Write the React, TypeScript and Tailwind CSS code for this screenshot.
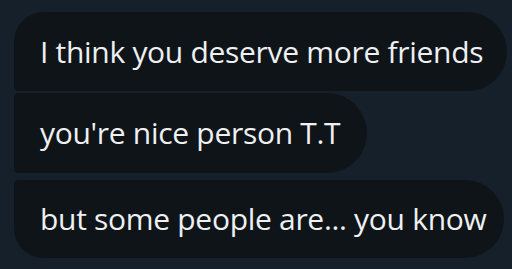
import React from "react";

export default function App() {
  return (
    <div
      className="w-[512px] h-[269px] bg-[#15202b] overflow-hidden pt-[12px] pl-[14px] flex flex-col items-start"
      style={{ fontFamily: '"Open Sans", "Noto Sans", sans-serif' }}
    >
      <div className="bg-[#0f1419] text-[#eef0f1] text-[30px] font-medium tracking-[-0.3px] leading-none h-[79px] flex items-center pl-[26px] pr-[24px] rounded-tl-[30px] rounded-bl-[4px] rounded-r-[40px]">
        I think you deserve more friends
      </div>
      <div className="mt-[2px] bg-[#0f1419] text-[#eef0f1] text-[30px] font-medium tracking-[-0.3px] leading-none h-[80px] flex items-center pl-[26px] pr-[27px] rounded-l-[4px] rounded-r-[40px]">
        you're nice person T.T
      </div>
      <div className="mt-[7px] bg-[#0f1419] text-[#eef0f1] text-[30px] font-medium tracking-[-0.3px] leading-none h-[78px] flex items-center pl-[26px] pr-[18px] rounded-tl-[4px] rounded-bl-[30px] rounded-r-[40px]">
        but some people are... you know
      </div>
    </div>
  );
}
